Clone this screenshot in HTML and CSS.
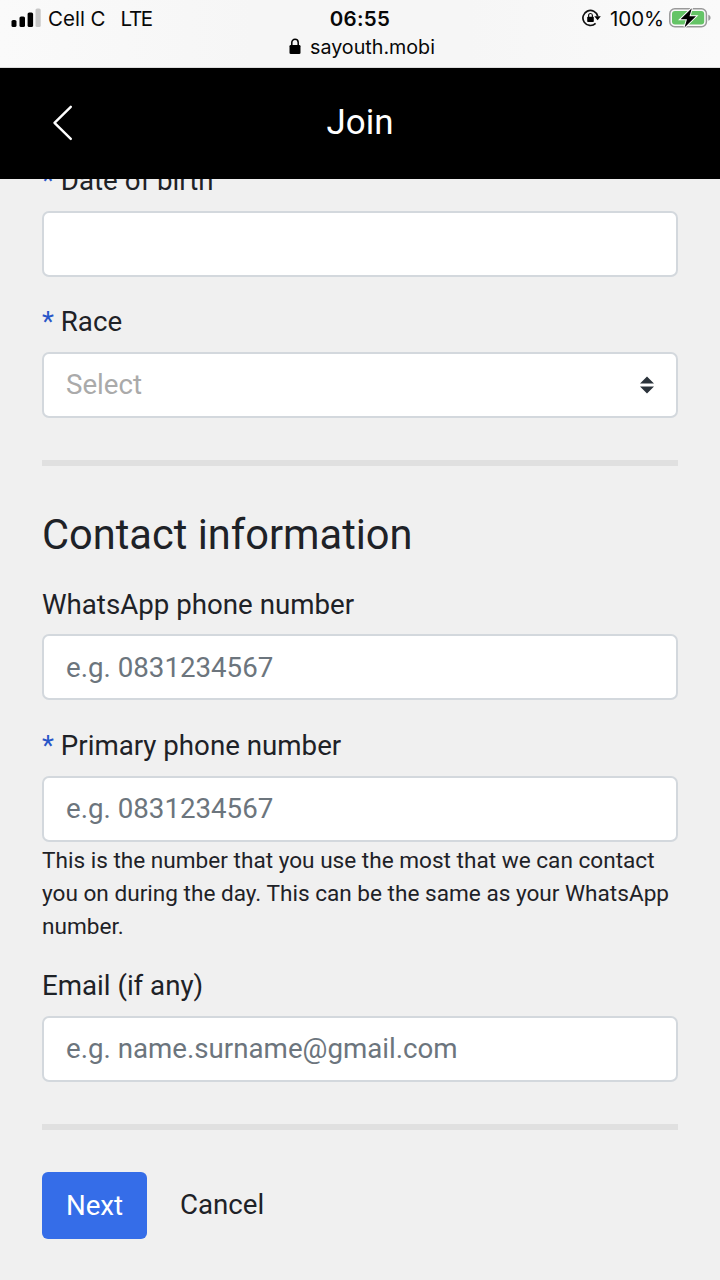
FILE: index.html
```html
<!DOCTYPE html>
<html lang="en">
<head>
<meta charset="utf-8">
<title>Join</title>
<link rel="stylesheet" href="styles.css">
</head>
<body>
<div class="screen">
  <header class="browser">
    <div class="status">
      <div class="status-left">
        <svg class="signal" width="30" height="20" viewBox="0 0 30 20"><rect x="0.500" y="12" width="5" height="7" rx="1.600"/><rect x="8.500" y="8.500" width="5.500" height="10.500" rx="1.600"/><rect x="16.600" y="4.500" width="5.500" height="14.500" rx="1.600"/><rect x="24.500" y="0.500" width="5.200" height="18.500" rx="1.600" fill="#c7c7c7"/></svg>
        <span class="carrier">Cell C</span><span class="network">LTE</span>
      </div>
      <div class="time">06:55</div>
      <div class="status-right">
        <svg class="rotation" width="19" height="18" viewBox="0 0 19 18"><path d="M13.600 14.400A7.500 7.500 0 1 1 15.700 7.200" fill="none" stroke="#111" stroke-width="1.700"/><path d="M12.300 7.200h6.500l-3.200 4z"/><rect x="5.200" y="7.800" width="6.600" height="5.200" rx=".7"/><path d="M6.600 8V6.400a1.900 1.900 0 0 1 3.800 0V8" fill="none" stroke="#111" stroke-width="1.200"/></svg>
        <span class="percent">100%</span>
        <svg class="battery" width="43" height="22" viewBox="0 0 43 22"><rect x=".8" y="1.800" width="36.600" height="18" rx="5" fill="#fafafa" stroke="#999" stroke-width="1.500"/><rect x="3" y="4" width="32.200" height="13.600" rx="3" fill="#65c466"/><path d="M39.300 7.800c3 1 3 5 0 6z" fill="#999"/><path d="M22.800 1.200 11.500 12.200h6.500l-2.500 8.200L27 9.200h-6.500z" fill="#000" stroke="#fff" stroke-width="2" paint-order="stroke"/></svg>
      </div>
    </div>
    <div class="address">
      <svg width="12" height="17" viewBox="0 0 12 17"><rect x=".5" y="7" width="11" height="9" rx="1.300"/><path d="M2.800 7.500V4.500a3.200 3.200 0 0 1 6.400 0v3" fill="none" stroke="#000" stroke-width="1.500"/></svg>
      <span>sayouth.mobi</span>
    </div>
  </header>
  <nav class="nav">
    <svg class="back" width="22" height="38" viewBox="0 0 22 38"><path d="M18.800 2.800 2.500 18.900l16.300 16" fill="none" stroke="#fff" stroke-width="2.400" stroke-linecap="round" stroke-linejoin="round"/></svg>
    <h1 class="title">Join</h1>
  </nav>
  <main class="content">
    <form class="form">
      <div class="field"><label class="label"><span class="star">*</span> Date of birth</label><div class="input"></div></div>
      <div class="field"><label class="label"><span class="star">*</span> Race</label><div class="input select"><span>Select</span><svg width="14" height="18" viewBox="0 0 14 18"><path d="M0 7.500 7 .5l7 7zM0 10.500l7 7 7-7z" fill="#2b333b"/></svg></div></div>
      <div class="rule"></div>
      <h2 class="heading">Contact information</h2>
      <div class="field"><label class="label">WhatsApp phone number</label><div class="input">e.g. 0831234567</div></div>
      <div class="field"><label class="label"><span class="star">*</span> Primary phone number</label><div class="input">e.g. 0831234567</div>
        <p class="help">This is the number that you use the most that we can contact<br>you on during the day. This can be the same as your WhatsApp<br>number.</p></div>
      <div class="field"><label class="label">Email (if any)</label><div class="input">e.g. name.surname@gmail.com</div></div>
      <div class="rule"></div>
      <div class="actions"><span class="next">Next</span><span class="cancel">Cancel</span></div>
    </form>
  </main>
</div>
</body>
</html>
```
FILE: styles.css
```css
* { box-sizing: border-box; }
body { margin: 0; font-family: Roboto, sans-serif; color: #1e2227; }
h1, h2, p { margin: 0; font-weight: 400; }
svg { display: block; flex: none; }
.screen { width: 720px; height: 1280px; display: flex; flex-direction: column; background: #f0f0f0; overflow: hidden; }
.browser { height: 68px; flex: none; background: linear-gradient(90deg, #fafafa, #f6f6f6 35%, #f6f6f6 65%, #fafafa); border-bottom: 1px solid #ddd; font-family: Inter, sans-serif; color: #080808; }
.status { display: grid; grid-template-columns: 1fr auto 1fr; height: 36px; align-items: center; font-size: 20.5px; }
.status-left, .status-right { display: flex; align-items: center; }
.status-left { padding-left: 11px; }
.signal { margin-top: -1px; }
.carrier { margin-left: 7px; }
.network { margin-left: 15px; letter-spacing: -1.300px; }
.time { font-weight: 600; letter-spacing: .3px; }
.status-right { justify-content: flex-end; padding-right: 9px; }
.percent { margin: 0 5px 0 9px; letter-spacing: -.1px; }
.battery { margin-right: -1px; }
.address { display: flex; justify-content: center; align-items: center; gap: 9px; height: 21px; font-size: 19.700px; padding-left: 4px; }
.nav { height: 110.500px; flex: none; background: #000; display: grid; grid-template-columns: 1fr auto 1fr; align-items: center; color: #fff; }
.back { margin-left: 52px; }
.title { font-size: 34.900px; line-height: 42px; }
.content { flex: 1; min-height: 0; overflow: hidden; padding: 0 42px; }
.form { margin-top: -19.600px; }
.field { margin-bottom: 23.400px; }
.label { display: block; height: 42px; line-height: 44px; margin-bottom: 9.800px; font-size: 27.700px; white-space: pre; }
.star { color: #2856c8; }
.input { height: 66px; border: 2px solid #d3d8dd; border-radius: 7px; background: #fff; padding: 0 22px; display: flex; align-items: center; font-size: 27.700px; color: #6c757d; }
.select { justify-content: space-between; color: #aaa; }
.rule { height: 6.500px; margin-top: 42px; background: #e0e0e0; }
.heading { font-size: 41.600px; line-height: 50px; margin: 43.400px 0 22.800px; }
.help { font-size: 22.600px; line-height: 33px; margin: 2.500px 0 -2.500px; color: #1e2227; white-space: nowrap; }
.actions { display: flex; align-items: center; margin-top: 42px; font-size: 27.700px; }
.next { width: 105px; height: 66.500px; line-height: 67px; text-align: center; color: #fff; background: #356de8; border-radius: 6px; }
.cancel { margin: -2px 0 0 33px; }
```
